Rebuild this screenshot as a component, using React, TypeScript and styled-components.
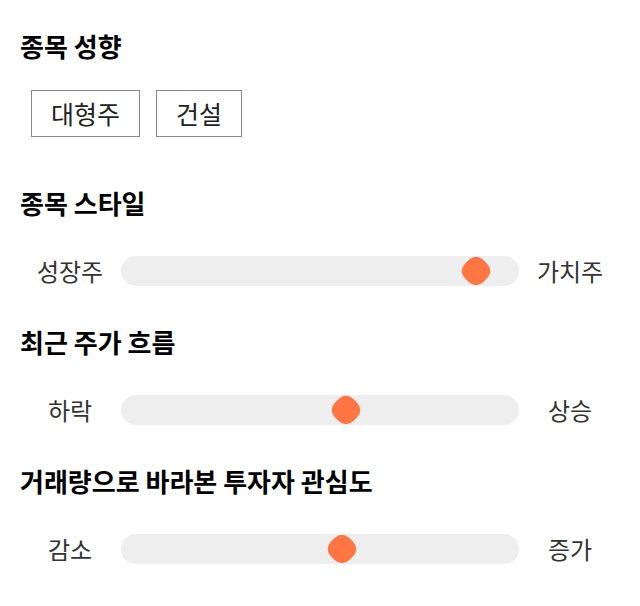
import { createGlobalStyle } from 'styled-components';
import styled from 'styled-components';

const GlobalStyle = createGlobalStyle`
  body {
    margin: 0;
    background: #fff;
    font-family: 'Noto Sans CJK KR', 'Noto Sans', sans-serif;
  }
`;

const Page = styled.div`
  display: flex;
  flex-direction: column;
  padding: 30px 20px 0 20px;
`;

const Section = styled.section<{ $after: number }>`
  display: flex;
  flex-direction: column;
  margin-bottom: ${(p) => p.$after}px;
`;

const Title = styled.h2<{ $gap: number }>`
  margin: 0 0 ${(p) => p.$gap}px 0;
  font-size: 26px;
  line-height: 32px;
  font-weight: 700;
  color: #000;
`;

const Tags = styled.div`
  display: flex;
  gap: 16px;
  padding-left: 11px;
`;

const Tag = styled.button`
  font-family: inherit;
  font-size: 25px;
  line-height: 33px;
  padding: 6px 19px;
  border: 1px solid #888;
  border-radius: 0;
  background: #fff;
  color: #222;
`;

const SliderRow = styled.div`
  display: grid;
  grid-template-columns: 100px 1fr 100px;
  column-gap: 1px;
  align-items: center;
  height: 30px;
`;

const SideLabel = styled.span`
  text-align: center;
  font-size: 24px;
  line-height: 30px;
  color: #333;
`;

const Track = styled.div`
  position: relative;
  height: 30px;
  border-radius: 15px;
  background: #eeeeee;
`;

const Thumb = styled.div`
  position: absolute;
  top: 50%;
  width: 26px;
  height: 26px;
  border-radius: 10px;
  background: #ff7543;
  transform: translate(-50%, -50%) rotate(45deg);
`;

const sliders = [
  { title: '종목 스타일', left: '성장주', right: '가치주', x: 355 },
  { title: '최근 주가 흐름', left: '하락', right: '상승', x: 225 },
  { title: '거래량으로 바라본 투자자 관심도', left: '감소', right: '증가', x: 221 },
];

export default function App() {
  return (
    <>
      <GlobalStyle />
      <Page>
        <Section $after={50}>
          <Title $gap={28}>종목 성향</Title>
          <Tags>
            <Tag>대형주</Tag>
            <Tag>건설</Tag>
          </Tags>
        </Section>
        {sliders.map((s) => (
          <Section key={s.title} $after={40}>
            <Title $gap={37}>{s.title}</Title>
            <SliderRow>
              <SideLabel>{s.left}</SideLabel>
              <Track>
                <Thumb style={{ left: s.x }} />
              </Track>
              <SideLabel>{s.right}</SideLabel>
            </SliderRow>
          </Section>
        ))}
      </Page>
    </>
  );
}
